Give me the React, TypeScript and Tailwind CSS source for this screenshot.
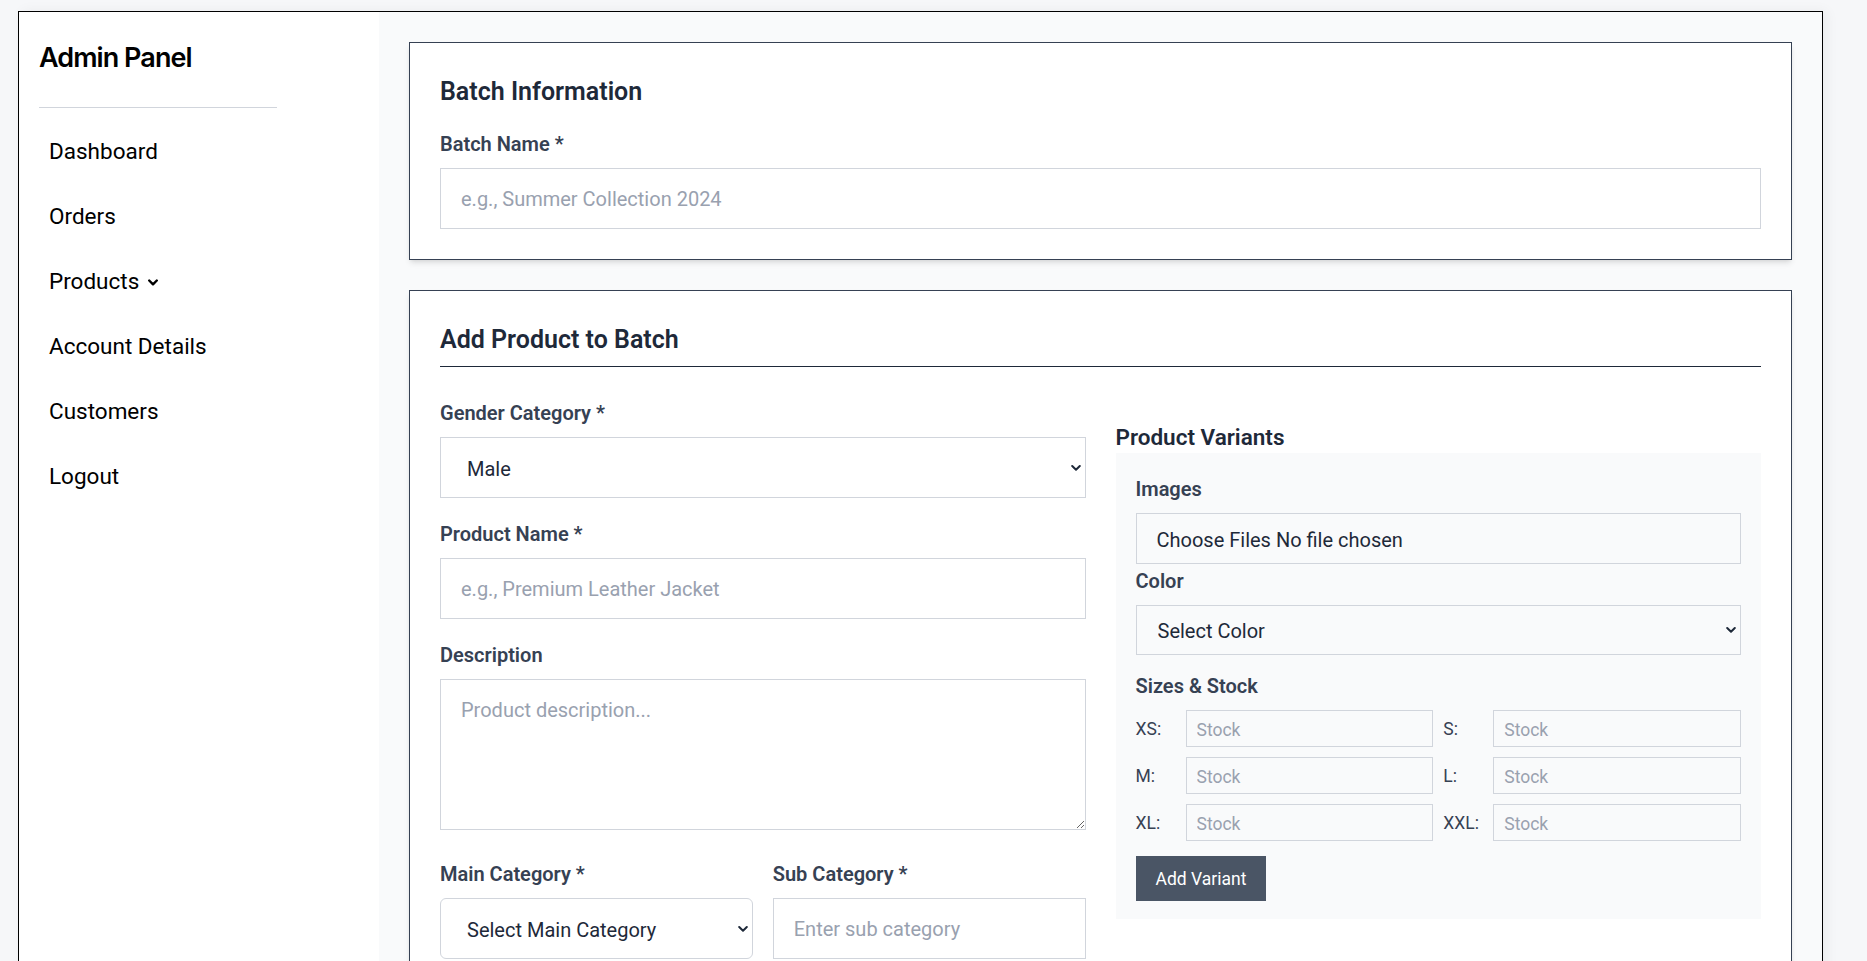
import React from "react";

function Chevron({ className = "", sw = 2 }: { className?: string; sw?: number }) {
  return (
    <svg viewBox="0 0 10 7" width="10" height="7" className={className} fill="none">
      <polyline points="1.2,1.5 5,5.3 8.8,1.5" stroke="currentColor" strokeWidth={sw} strokeLinecap="round" strokeLinejoin="round" />
    </svg>
  );
}

function Label({ children }: { children: React.ReactNode }) {
  return <label className="block pt-[3px] text-[20px] leading-[27px] font-semibold text-gray-700 mb-[10px]">{children}</label>;
}

function SelectBox({ text, className = "", h = "h-[61px]", pl = "pl-[26px]" }: { text: string; className?: string; h?: string; pl?: string }) {
  return (
    <div className={`relative ${h} ${className}`}>
      <select className={`w-full ${h} ${pl} appearance-none border border-gray-300 bg-transparent pr-[24px] pt-[2px] text-[20px] text-gray-800 outline-none ${className}`}>
        <option>{text}</option>
      </select>
      <Chevron className="pointer-events-none absolute right-[5px] top-1/2 -translate-y-1/2 text-gray-800" />
    </div>
  );
}

export default function App() {
  const nav = ["Dashboard", "Orders", "Products", "Account Details", "Customers", "Logout"];
  const sizes = ["XS", "S", "M", "L", "XL", "XXL"];
  return (
    <div className="h-[961px] w-[1867px] overflow-hidden bg-[#f6f7f9] pl-[18px] pt-[11px] font-['Roboto',sans-serif]">
      <div className="flex w-[1805px] min-h-[960px] border border-black shadow-[4px_0_12px_rgba(0,0,0,0.05)]">
        <aside className="w-[360px] shrink-0 bg-white px-[20px] pt-[30px]">
          <div className="w-[238px] border-b border-gray-300 pb-[33px]">
            <h1 className="font-['Inter',sans-serif] text-[27px] font-semibold leading-[32px] tracking-[-0.035em] text-black">Admin Panel</h1>
          </div>
          <nav className="mt-[11px] flex flex-col">
            {nav.map((n) => (
              <a key={n} className="flex items-center px-[10px] py-[15px] text-[22.5px] leading-[35px] text-black">
                {n}
                {n === "Products" && <Chevron sw={2.4} className="ml-[9px] mt-[2px] w-[10px] text-black" />}
              </a>
            ))}
          </nav>
        </aside>
        <main className="flex flex-1 flex-col gap-[30px] bg-gray-50 p-[30px]">
          <section className="border border-gray-700 bg-white p-[30px] shadow-md">
            <h2 className="mb-[20px] pt-[3px] text-[25px] font-semibold leading-[32px] text-gray-800">Batch Information</h2>
            <Label>Batch Name *</Label>
            <input
              placeholder="e.g., Summer Collection 2024"
              className="block h-[61px] w-full border border-gray-300 px-[20px] text-[20px] text-gray-800 outline-none placeholder:text-gray-400"
            />
          </section>
          <section className="border border-gray-700 bg-white px-[30px] pt-[30px] pb-[40px] shadow-md">
            <h2 className="mb-[30px] border-b border-gray-800 pt-[3px] pb-[10px] text-[25px] font-semibold leading-[32px] text-gray-800">Add Product to Batch</h2>
            <div className="grid grid-cols-2 gap-[30px]">
              <div className="flex flex-col">
                <Label>Gender Category *</Label>
                <SelectBox text="Male" />
                <div className="mt-[20px]">
                  <Label>Product Name *</Label>
                  <input
                    placeholder="e.g., Premium Leather Jacket"
                    className="block h-[61px] w-full border border-gray-300 px-[20px] text-[20px] text-gray-800 outline-none placeholder:text-gray-400"
                  />
                </div>
                <div className="mt-[20px]">
                  <Label>Description</Label>
                  <textarea
                    placeholder="Product description..."
                    className="block h-[151px] w-full border border-gray-300 px-[20px] py-[15px] text-[20px] leading-[30px] text-gray-800 outline-none placeholder:text-gray-400"
                  />
                </div>
                <div className="mt-[28px] grid grid-cols-2 gap-[20px]">
                  <div>
                    <Label>Main Category *</Label>
                    <SelectBox text="Select Main Category" className="rounded-[6px]" />
                  </div>
                  <div>
                    <Label>Sub Category *</Label>
                    <input
                      placeholder="Enter sub category"
                      className="block h-[61px] w-full border border-gray-300 px-[20px] text-[20px] text-gray-800 outline-none placeholder:text-gray-400"
                    />
                  </div>
                </div>
              </div>
              <div className="mt-[21px]">
                <h3 className="pt-[3px] text-[22.5px] font-semibold leading-[32px] text-gray-800">Product Variants</h3>
                <div className="bg-gray-50 px-[20px] pt-[20px] pb-[18px]">
                  <Label>Images</Label>
                  <div className="flex h-[51px] items-center border border-gray-300 px-[20px] pt-[2px] text-[20px] text-gray-800">
                    Choose Files No file chosen
                  </div>
                  <div className="mt-[1px]">
                    <Label>Color</Label>
                    <SelectBox text="Select Color" h="h-[50px]" pl="pl-[21px]" />
                  </div>
                  <div className="mt-[15px]">
                    <Label>Sizes &amp; Stock</Label>
                    <div className="grid grid-cols-2 gap-[10px]">
                      {sizes.map((s) => (
                        <div key={s} className="flex items-center">
                          <span className="w-[50px] shrink-0 pt-[2px] text-[17.5px] text-gray-700">{s}:</span>
                          <input
                            placeholder="Stock"
                            className="block h-[37px] min-w-0 flex-1 border border-gray-300 bg-transparent px-[10px] pt-[2px] text-[17.5px] outline-none placeholder:text-gray-400"
                          />
                        </div>
                      ))}
                    </div>
                  </div>
                  <button className="mt-[15px] h-[45px] bg-gray-600 px-[20px] pt-[2px] text-[17.5px] text-white">Add Variant</button>
                </div>
              </div>
            </div>
          </section>
        </main>
      </div>
    </div>
  );
}
